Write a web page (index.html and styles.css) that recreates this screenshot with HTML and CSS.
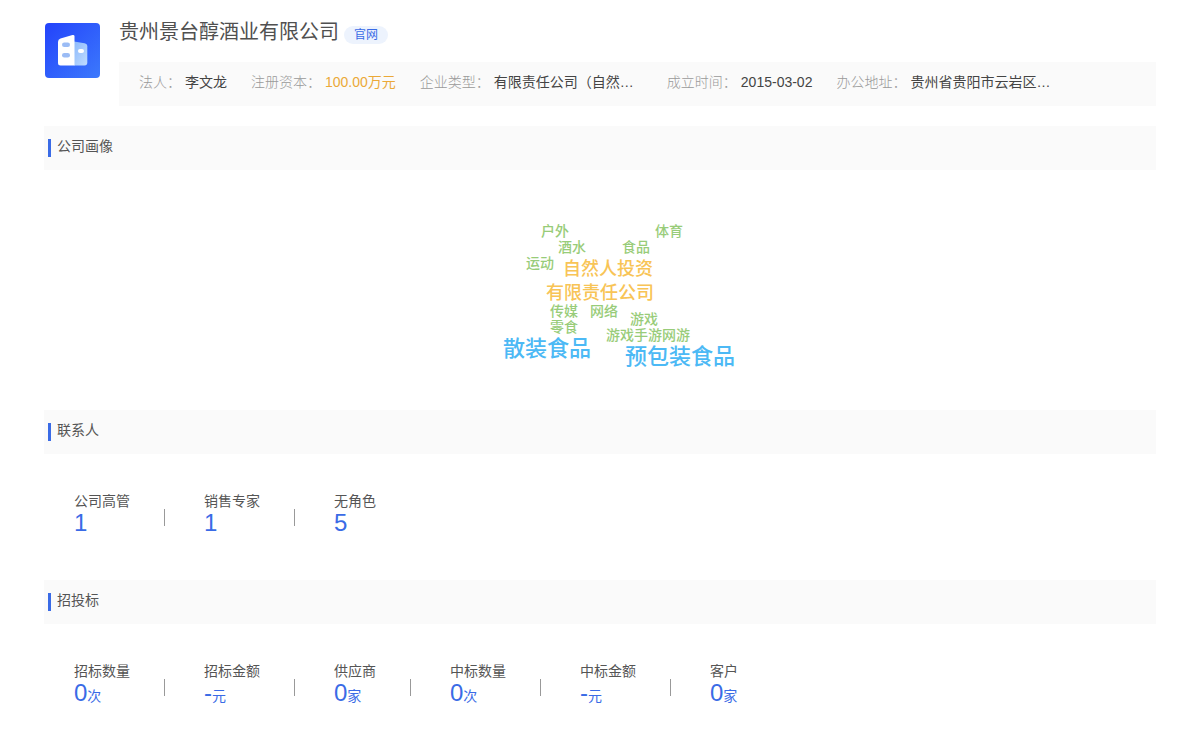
FILE: index.html
```html
<!DOCTYPE html>
<html lang="zh-CN">
<head>
<meta charset="utf-8">
<title>贵州景台醇酒业有限公司</title>
<link rel="stylesheet" href="styles.css">
</head>
<body>
<main class="page">
  <header class="company">
    <svg class="logo" viewBox="0 0 55 55" aria-hidden="true">
      <defs>
        <linearGradient id="logo-bg" x1="0" y1="0" x2="1" y2="1">
          <stop offset="0" stop-color="#2343fb"/>
          <stop offset="1" stop-color="#3c79fc"/>
        </linearGradient>
        <linearGradient id="logo-side" x1="0" y1="0" x2="1" y2="1">
          <stop offset="0" stop-color="#8db9fb"/>
          <stop offset="1" stop-color="#bfdcff"/>
        </linearGradient>
      </defs>
      <rect width="55" height="55" rx="4" fill="url(#logo-bg)"/>
      <path d="M29 18.5 L39.5 20.2 Q42.3 20.8 42.3 23.5 V39.5 Q42.3 42.5 39.5 42.5 H29Z" fill="url(#logo-side)"/>
      <path d="M13 19 Q13 16.200 15.500 15.400 L27.500 12.100 Q29.500 11.700 29.500 13.500 V42.500 H15.500 Q13 42.500 13 40Z" fill="#fff"/>
      <rect x="17" y="19.500" width="8" height="4.500" rx="2.250" fill="#9bbcf5"/>
      <rect x="17" y="30" width="8" height="4.500" rx="2.250" fill="#9bbcf5"/>
      <rect x="33" y="26" width="6" height="4" rx="2" fill="#fff"/>
    </svg>
    <div class="company-main">
      <div class="title-row">
        <h1 class="company-name">贵州景台醇酒业有限公司</h1>
        <a class="site-link" href="#">官网</a>
      </div>
      <dl class="facts">
        <div class="fact"><dt>法人：</dt><dd>李文龙</dd></div>
        <div class="fact"><dt>注册资本：</dt><dd class="capital">100.00万元</dd></div>
        <div class="fact"><dt>企业类型：</dt><dd class="wide">有限责任公司（自然…</dd></div>
        <div class="fact"><dt>成立时间：</dt><dd>2015-03-02</dd></div>
        <div class="fact"><dt>办公地址：</dt><dd class="wide">贵州省贵阳市云岩区…</dd></div>
      </dl>
    </div>
  </header>

  <section>
    <h2 class="section-title">公司画像</h2>
    <div class="portrait">
      <div class="cloud">
        <span class="word small w-outdoor">户外</span>
        <span class="word small w-sports">体育</span>
        <span class="word small w-drinks">酒水</span>
        <span class="word small w-food">食品</span>
        <span class="word small w-motion">运动</span>
        <span class="word medium w-person">自然人投资</span>
        <span class="word medium w-limited">有限责任公司</span>
        <span class="word small w-media">传媒</span>
        <span class="word small w-network">网络</span>
        <span class="word small w-game">游戏</span>
        <span class="word small w-snack">零食</span>
        <span class="word small w-mobile">游戏手游网游</span>
        <span class="word large w-bulk">散装食品</span>
        <span class="word large w-packed">预包装食品</span>
      </div>
    </div>
  </section>

  <section>
    <h2 class="section-title">联系人</h2>
    <dl class="stats">
      <div class="stat"><dt>公司高管</dt><dd>1</dd></div>
      <div class="stat"><dt>销售专家</dt><dd>1</dd></div>
      <div class="stat"><dt>无角色</dt><dd>5</dd></div>
    </dl>
  </section>

  <section>
    <h2 class="section-title">招投标</h2>
    <dl class="stats">
      <div class="stat"><dt>招标数量</dt><dd>0<span class="unit">次</span></dd></div>
      <div class="stat"><dt>招标金额</dt><dd>-<span class="unit">元</span></dd></div>
      <div class="stat"><dt>供应商</dt><dd>0<span class="unit">家</span></dd></div>
      <div class="stat"><dt>中标数量</dt><dd>0<span class="unit">次</span></dd></div>
      <div class="stat"><dt>中标金额</dt><dd>-<span class="unit">元</span></dd></div>
      <div class="stat"><dt>客户</dt><dd>0<span class="unit">家</span></dd></div>
    </dl>
  </section>
</main>
</body>
</html>
```

FILE: styles.css
```css
* {
  box-sizing: border-box;
}

body,
h1,
h2,
dl,
dd {
  margin: 0;
}

body {
  background: #fff;
  color: #444;
  font: 14px/20px "Liberation Sans", "Noto Sans CJK SC", sans-serif;
}

.page {
  padding: 16px 44px 0;
}

.company {
  display: flex;
  gap: 19px;
  margin-bottom: 20px;
}

.logo {
  flex: none;
  width: 55px;
  height: 55px;
  margin: 7px 0 0 1px;
}

.company-main {
  flex: 1;
  min-width: 0;
}

.title-row {
  display: flex;
  align-items: flex-end;
  gap: 5px;
  height: 28px;
  margin-bottom: 18px;
}

.company-name {
  align-self: flex-start;
  color: #505050;
  font-size: 20px;
  font-weight: 400;
  line-height: 32px;
}

.site-link {
  padding: 0 10px;
  border-radius: 9px;
  background: #edf3fd;
  color: #3a6be6;
  font-size: 12px;
  line-height: 18px;
  text-decoration: none;
}

.facts {
  display: flex;
  gap: 24px;
  padding: 10px 20px 14px;
  background: #fafafa;
}

.fact {
  display: flex;
  gap: 4px;
  white-space: nowrap;
}

.fact dt {
  color: #999;
  font-weight: 300;
}

.fact dd {
  color: #444;
}

.fact .wide {
  min-width: 149px;
}

.fact .capital {
  color: #eba938;
}

.section-title {
  display: flex;
  align-items: center;
  gap: 6px;
  height: 44px;
  padding: 0 4px 4px;
  background: #fafafa;
  color: #555;
  font-size: 14px;
  font-weight: 400;
}

.section-title::before {
  width: 3px;
  height: 18px;
  margin-top: 4px;
  background: #3a6be6;
  content: "";
}

.portrait {
  display: flex;
  justify-content: center;
  height: 240px;
}

/* Free canvas: every word has its own place */
.cloud {
  position: relative;
  width: 240px;
}

.word {
  position: absolute;
  font-weight: 500;
  white-space: nowrap;
}

.small {
  color: #98cc79;
  font-size: 14px;
  line-height: 20px;
}

.medium {
  color: #f8c456;
  font-size: 18px;
  line-height: 26px;
}

.large {
  color: #4cb9f5;
  font-size: 22px;
  line-height: 32px;
}

.w-outdoor { left: 61px; top: 51px; }
.w-sports { left: 175px; top: 51px; }
.w-drinks { left: 78px; top: 67px; }
.w-food { left: 142px; top: 67px; }
.w-motion { left: 46px; top: 83px; }
.w-person { left: 83px; top: 86px; }
.w-limited { left: 66px; top: 110px; }
.w-media { left: 70px; top: 131px; }
.w-network { left: 110px; top: 131px; }
.w-game { left: 150px; top: 139px; }
.w-snack { left: 70px; top: 147px; }
.w-mobile { left: 126px; top: 155px; }
.w-bulk { left: 23px; top: 163px; }
.w-packed { left: 145px; top: 171px; }

.stats {
  display: flex;
  gap: 39px;
  padding: 37px 30px 45px;
}

.stat {
  display: grid;
  grid-template-columns: auto 1px;
  column-gap: 34px;
}

.stat dt {
  grid-column: 1;
  color: #555;
}

.stat dd {
  grid-column: 1;
  color: #3a6be6;
  font-size: 24px;
  line-height: 24px;
  white-space: nowrap;
}

.stat:not(:last-child)::after {
  grid-area: 1 / 2 / 3 / 3;
  align-self: start;
  height: 17px;
  margin-top: 18px;
  background: #999;
  content: "";
}

.unit {
  font-size: 14px;
  line-height: 14px;
}
```
